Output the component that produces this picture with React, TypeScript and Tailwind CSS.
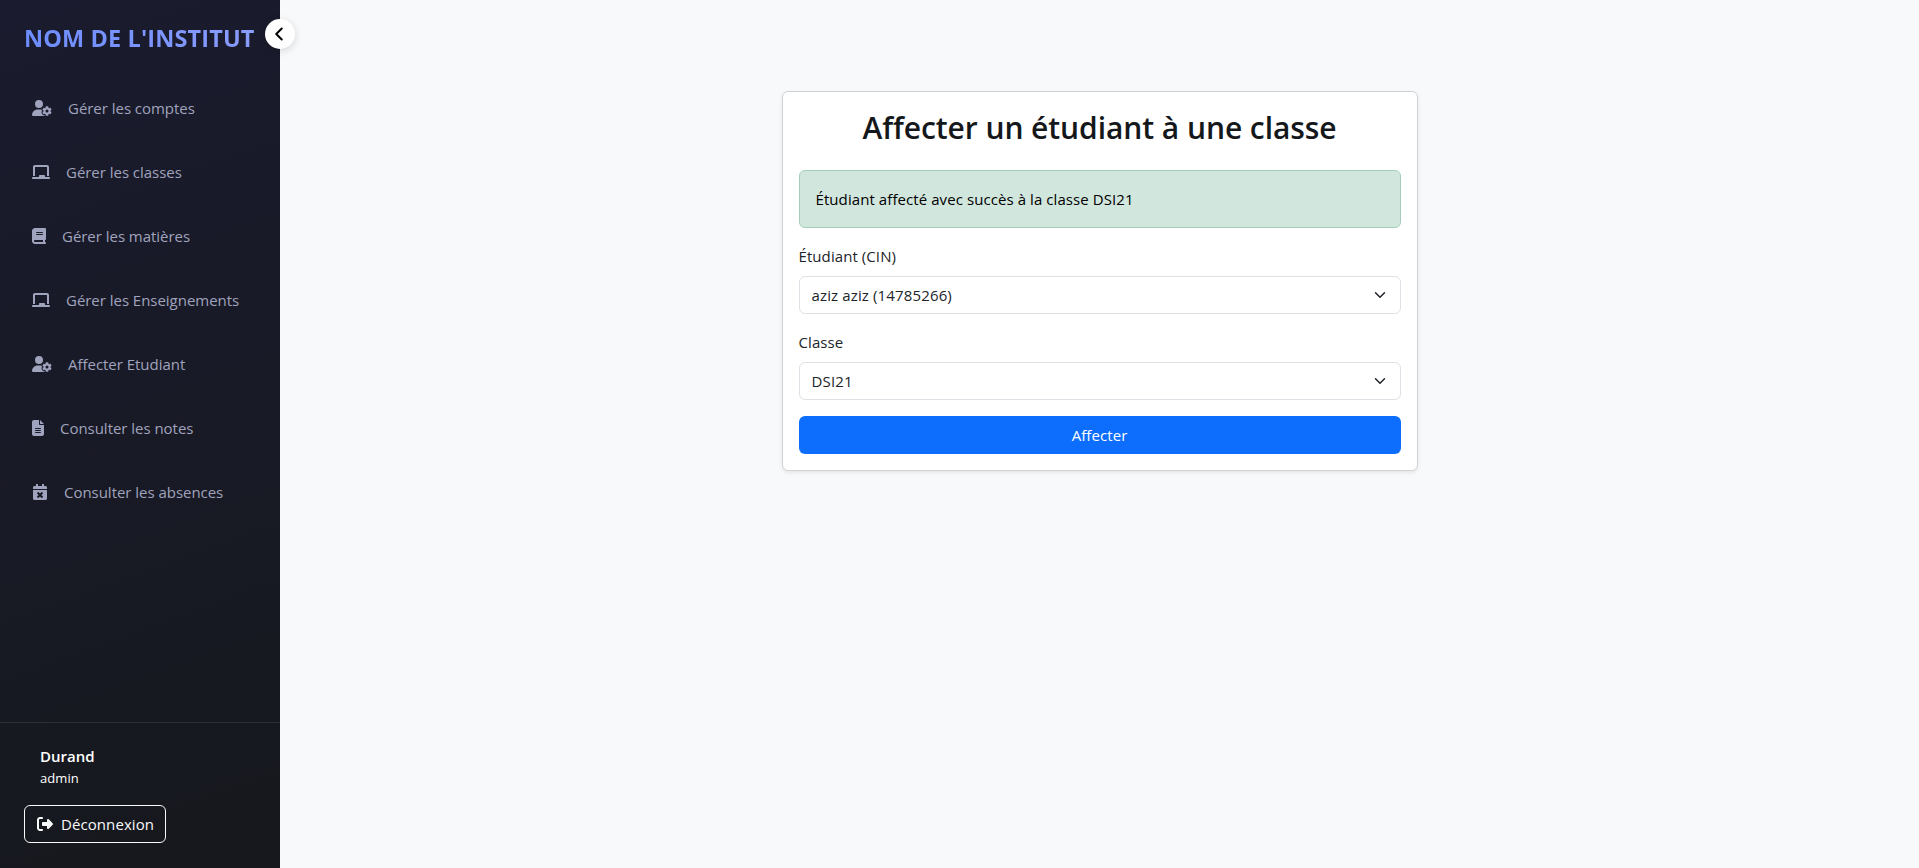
import React from "react";
import type { IconType } from "react-icons";
import { FaUserGear, FaChalkboard, FaBook, FaFileLines, FaRightFromBracket } from "react-icons/fa6";
import { FaCalendarTimes } from "react-icons/fa";
import { FiChevronLeft } from "react-icons/fi";

const items: { label: string; icon: IconType; width: string }[] = [
  { label: "Gérer les comptes", icon: FaUserGear, width: "w-5" },
  { label: "Gérer les classes", icon: FaChalkboard, width: "w-[18px]" },
  { label: "Gérer les matières", icon: FaBook, width: "w-3.5" },
  { label: "Gérer les Enseignements", icon: FaChalkboard, width: "w-[18px]" },
  { label: "Affecter Etudiant", icon: FaUserGear, width: "w-5" },
  { label: "Consulter les notes", icon: FaFileLines, width: "w-3" },
  { label: "Consulter les absences", icon: FaCalendarTimes, width: "w-4" },
];

function Select({ label, value }: { label: string; value: string }) {
  return (
    <div className="mb-4">
      <label className="mb-2 block h-6">{label}</label>
      <div className="flex h-[38px] items-center justify-between rounded-md border border-[#dee2e6] bg-white px-3">
        <span className="tracking-[0.14px]">{value}</span>
        <svg viewBox="0 0 16 16" className="h-3 w-4" fill="none" stroke="#212529" strokeWidth="2" strokeLinecap="round" strokeLinejoin="round">
          <path d="m2 5 6 6 6-6" />
        </svg>
      </div>
    </div>
  );
}

export default function App() {
  return (
    <div className="flex h-[868px] bg-[#f8f9fa] font-['Open_Sans','Noto_Sans',sans-serif] text-[15px] leading-6 tracking-[0.08px] text-[#212529]">
      <aside className="relative flex w-[280px] shrink-0 flex-col bg-[linear-gradient(160deg,#1a1b2e_0%,#16181d_100%)]">
        <h1 className="px-6 pt-[23px] text-[23.5px] leading-[30px] font-bold tracking-[0.12px] whitespace-nowrap">
          <span className="bg-[linear-gradient(45deg,#6b8cff,#8b9dff)] bg-clip-text text-transparent">NOM DE L'INSTITUT</span>
        </h1>
        <button className="absolute top-[19px] -right-[15px] flex size-[30px] items-center justify-center rounded-full bg-white pr-0.5 text-black shadow-[0_2px_8px_rgba(0,0,0,0.15)]">
          <FiChevronLeft className="size-[22px]" strokeWidth={2.2} />
        </button>
        <nav className="mt-[27px] flex flex-col gap-2 px-4">
          {items.map(({ label, icon: Icon, width }) => (
            <a key={label} className="flex h-14 items-center gap-4 px-4 tracking-[-0.03px] text-[#a0a3bd]">
              <Icon className={`h-4 shrink-0 ${width}`} />
              <span>{label}</span>
            </a>
          ))}
        </nav>
        <div className="mt-auto h-[146px] border-t border-white/10 px-6 pt-[21px] text-white">
          <div className="pl-4">
            <div className="font-semibold tracking-normal">Durand</div>
            <div className="text-[13px] leading-[21px]">admin</div>
          </div>
          <button className="mt-4 flex h-[38px] w-[142px] items-center rounded-md border border-[#f8f9fa] pl-3 text-[#f8f9fa]">
            <FaRightFromBracket className="mr-2 size-4" />
            Déconnexion
          </button>
        </div>
      </aside>
      <main className="flex flex-1 items-start justify-center pt-[91px]">
        <section className="w-[636px] rounded-md border border-[#d0d1d2] bg-white p-4 shadow-[0_2px_4px_rgba(0,0,0,0.075)]">
          <h2 className="mb-[23px] pt-px text-center text-[30px] leading-[38px] font-semibold tracking-[-0.07px] text-[#15181b]">
            Affecter un étudiant à une classe
          </h2>
          <div className="mb-4 flex h-[58px] items-center rounded-md border border-[#a3cfbb] bg-[#d1e7dd] px-4 text-black">
            Étudiant affecté avec succès à la classe DSI21
          </div>
          <Select label="Étudiant (CIN)" value="aziz aziz (14785266)" />
          <Select label="Classe" value="DSI21" />
          <button className="h-[38px] w-full rounded-md bg-[#0d6efd] text-white">Affecter</button>
        </section>
      </main>
    </div>
  );
}
